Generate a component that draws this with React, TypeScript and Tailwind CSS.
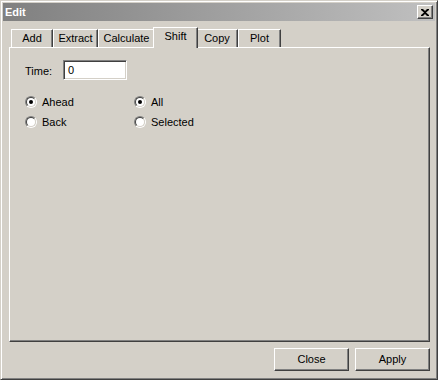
import React from "react";

function Tab({ label, w, selected }: { label: string; w: number; selected?: boolean }) {
  if (selected) {
    return (
      <div
        className="relative z-10 -mx-[2px] -mb-px flex h-[21px] items-start justify-center border-l border-t border-r border-white border-r-[#404040] bg-[#d4d0c8] pt-[2px] shadow-[inset_-1px_0_0_#808080]"
        style={{ width: w + 4 }}
      >
        {label}
      </div>
    );
  }
  return (
    <div
      className="flex h-[18px] items-start justify-center border-l border-t border-r border-white border-r-[#404040] bg-[#d4d0c8] pt-[2px] shadow-[inset_-1px_0_0_#808080]"
      style={{ width: w }}
    >
      {label}
    </div>
  );
}

function Radio({ label, checked }: { label: string; checked?: boolean }) {
  return (
    <div className="flex h-[16px] items-center gap-[5px]">
      <div className="h-[12px] w-[12px] rounded-full border border-t-[#808080] border-l-[#808080] border-r-white border-b-white">
        <div className="flex h-full w-full items-center justify-center rounded-full border border-t-[#404040] border-l-[#404040] border-r-[#d4d0c8] border-b-[#d4d0c8] bg-white">
          {checked && <div className="h-[4px] w-[4px] rounded-full bg-black" />}
        </div>
      </div>
      <span>{label}</span>
    </div>
  );
}

function Button({ label }: { label: string }) {
  return (
    <div className="flex h-[23px] w-[75px] items-center justify-center border border-t-white border-l-white border-r-[#404040] border-b-[#404040] bg-[#d4d0c8] shadow-[inset_-1px_-1px_0_#808080]">
      {label}
    </div>
  );
}

export default function App() {
  return (
    <div
      className="flex h-[380px] w-[438px] flex-col border border-[#d4d0c8] border-r-[#404040] border-b-[#404040] bg-[#d4d0c8] p-[2px] text-[11px] leading-[13px] text-black shadow-[inset_1px_1px_0_#ffffff,inset_-1px_-1px_0_#808080]"
      style={{ fontFamily: '"Liberation Sans", Arial, sans-serif' }}
    >
      {/* Title bar */}
      <div className="flex h-[18px] items-center justify-between bg-gradient-to-r from-[#808080] to-[#c0c0c0] pl-[2px] pr-[2px]">
        <span className="font-bold text-white">Edit</span>
        <div className="flex h-[14px] w-[16px] items-center justify-center border border-t-white border-l-white border-r-[#404040] border-b-[#404040] bg-[#d4d0c8] shadow-[inset_-1px_-1px_0_#808080]">
          <svg width="8" height="7" viewBox="0 0 8 7">
            <path d="M0 0h2l2 2 2-2h2v1L5 3.5 8 6v1H6L4 5 2 7H0V6l3-2.5L0 1z" fill="#000" />
          </svg>
        </div>
      </div>

      {/* Tabs */}
      <div className="ml-[6px] mr-[5px] mt-[6px] flex flex-col">
        <div className="flex h-[20px] items-end pl-[2px]">
          <Tab label="Add" w={42} />
          <Tab label="Extract" w={45} />
          <Tab label="Calculate" w={57} />
          <Tab label="Shift" w={41} selected />
          <Tab label="Copy" w={42} />
          <Tab label="Plot" w={43} />
        </div>
        <div className="flex h-[295px] w-[421px] flex-col border border-t-white border-l-white border-r-[#404040] border-b-[#404040] pl-[15px] pt-[12px] shadow-[inset_-1px_-1px_0_#808080]">
          <div className="flex items-center">
            <span className="mt-[3px] w-[38px]">Time:</span>
            <div className="flex h-[20px] w-[64px] items-center border border-t-[#808080] border-l-[#808080] border-r-white border-b-white bg-white pl-[4px] shadow-[inset_1px_1px_0_#404040,inset_-1px_-1px_0_#d4d0c8]">
              0
            </div>
          </div>
          <div className="mt-[14px] flex">
            <div className="flex w-[109px] flex-col gap-[4px]">
              <Radio label="Ahead" checked />
              <Radio label="Back" />
            </div>
            <div className="flex flex-col gap-[4px]">
              <Radio label="All" checked />
              <Radio label="Selected" />
            </div>
          </div>
        </div>
        <div className="mt-[6px] flex justify-end gap-[6px]">
          <Button label="Close" />
          <Button label="Apply" />
        </div>
      </div>
    </div>
  );
}
